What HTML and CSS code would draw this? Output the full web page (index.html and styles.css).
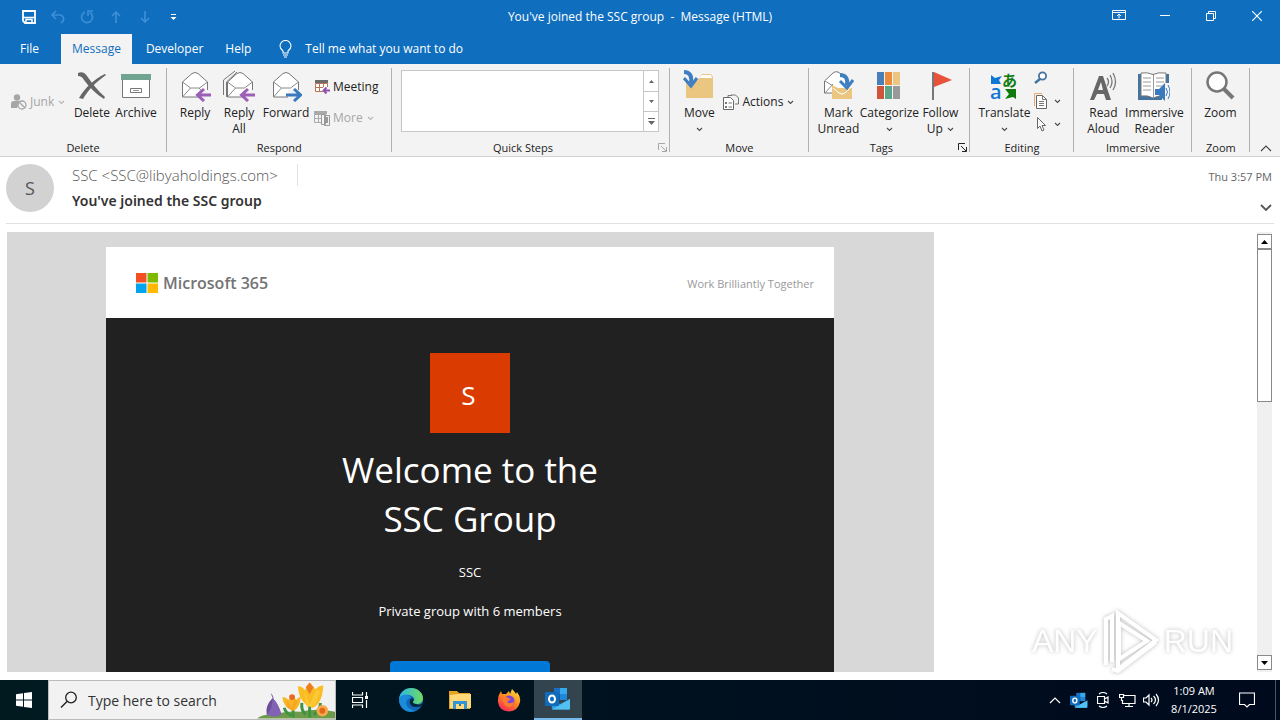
FILE: index.html
```html
<!DOCTYPE html>
<html lang="en">
<head>
  <meta charset="UTF-8" />
  <meta name="viewport" content="width=device-width, initial-scale=1.0"/>
  <title>You've joined the SSC group - Message (HTML)</title>
  <link rel="stylesheet" href="styles.css">
</head>
<body>
  <!-- shared symbols -->
  <svg class="defs" width="0" height="0" aria-hidden="true">
    <symbol id="chev" viewBox="0 0 7 5"><path d="M1 1l2.500 2.500L6 1" fill="none" stroke="currentColor" stroke-width="1.100"/></symbol>
    <symbol id="launcher" viewBox="0 0 9 9"><path d="M.5 7V.5H7M3 3l5 5M8.500 4v4.500H4" fill="none" stroke="currentColor"/></symbol>
    <symbol id="outlook" viewBox="0 0 26 24">
      <path d="M9 1h13v10H9z" fill="#1a6fc4"/>
      <path d="M15 1h7v6h-7z" fill="#38a9ea"/>
      <path d="M9 7h6v6H9z" fill="#155ea8"/>
      <path d="M15 7h7v6h-7z" fill="#1f86d8"/>
      <path d="M6 12l9 5 10-5v9.500a1 1 0 0 1-1 1H7z" fill="#2f9be0"/>
      <path d="M7 22.500L25 12v9.500a1 1 0 0 1-1 1z" fill="#51c1f1"/>
      <rect x="0" y="5" width="14" height="14" rx="1" fill="#0f6cbd"/>
      <ellipse cx="7" cy="12" rx="3" ry="3.500" fill="none" stroke="#fff" stroke-width="2"/>
    </symbol>
  </svg>

  <header class="titlebar">
    <div class="quick">
      <button aria-label="Save"><svg width="14" height="14" viewBox="0 0 14 14"><path d="M1 1h12v12H3l-2-2z" fill="none" stroke="#fff" stroke-width="1.800"/><path d="M1 7.500h12M4 13V9.500h6V13" fill="none" stroke="#fff" stroke-width="1.500"/></svg></button>
      <button aria-label="Undo" class="off"><svg width="14" height="14" viewBox="0 0 14 14"><path d="M5 1L1 5l4 4M1 5h8a4 4 0 0 1 3 6l-2 2" fill="none" stroke="currentColor" stroke-width="1.700"/></svg></button>
      <button aria-label="Redo" class="off"><svg width="14" height="14" viewBox="0 0 14 14"><path d="M5 2a5.500 5.500 0 1 0 5 0.500M13 1H8v5" fill="none" stroke="currentColor" stroke-width="1.700"/></svg></button>
      <button aria-label="Previous item" class="off"><svg width="12" height="14" viewBox="0 0 12 14"><path d="M6 13V2M2 6l4-4 4 4" fill="none" stroke="currentColor" stroke-width="1.700"/></svg></button>
      <button aria-label="Next item" class="off"><svg width="12" height="14" viewBox="0 0 12 14"><path d="M6 1v11M2 8l4 4 4-4" fill="none" stroke="currentColor" stroke-width="1.700"/></svg></button>
      <button aria-label="Customize"><svg width="7" height="7" viewBox="0 0 7 7"><path d="M1 0h5v1H1zM.5 3h6l-3 3z" fill="#fff"/></svg></button>
    </div>
    <h1 class="title">You've joined the SSC group&nbsp; -&nbsp; Message (HTML)</h1>
    <div class="winbtns">
      <button aria-label="Ribbon display options"><svg width="14" height="12" viewBox="0 0 14 12"><path d="M.5 1.500h13v9H.5zM.5 3.500h13M7 9.500V5M5 7l2-2 2 2" fill="none" stroke="#fff"/></svg></button>
      <button aria-label="Minimize"><svg width="10" height="10" viewBox="0 0 10 10"><path d="M0 4.500h10" stroke="#fff"/></svg></button>
      <button aria-label="Restore"><svg width="10" height="10" viewBox="0 0 10 10"><path d="M.5 2.500h7v7h-7zM2.500 2V.5h7v7H8" fill="none" stroke="#fff"/></svg></button>
      <button aria-label="Close"><svg width="10" height="10" viewBox="0 0 10 10"><path d="M0 0l10 10M10 0L0 10" stroke="#fff" stroke-width="1.200"/></svg></button>
    </div>
  </header>

  <nav class="tabs">
    <button class="tab file">File</button>
    <button class="tab active">Message</button>
    <button class="tab">Developer</button>
    <button class="tab">Help</button>
    <button class="tab tell">
      <svg width="13" height="18" viewBox="0 0 13 18"><path d="M4 13V11C2 9.500 1 8 1 6a5.500 5.500 0 0 1 11 0c0 2-1 3.500-3 5v2zM4 15h5M5 17h3" fill="none" stroke="#fff" stroke-width="1.100"/></svg>
      Tell me what you want to do
    </button>
  </nav>

  <section class="ribbon">
    <div class="group">
      <div class="tools delete">
        <button class="small off junk">
          <svg width="16" height="16" viewBox="0 0 16 16"><circle cx="6" cy="3.500" r="3.200" fill="#a6a6a6"/><path d="M0 14V10a3 3 0 0 1 3-3h6l-3 7z" fill="#a6a6a6"/><circle cx="11" cy="11" r="4" fill="#f3f3f3" stroke="#a6a6a6" stroke-width="1.300"/><path d="M8.300 8.300l5.500 5.500" stroke="#a6a6a6" stroke-width="1.300"/></svg>
          Junk <svg class="chev"><use href="#chev"/></svg>
        </button>
        <button class="big">
          <svg width="32" height="32" viewBox="0 0 32 32"><path d="M2 3c4-2 7 0 9 3 5 7 11 15 18 21l-1 2C20 24 13 17 8 10 6 7 5 6 2 6zM29 4l1 1C20 12 12 20 7 29l-4-1C9 18 18 9 29 4z" fill="#666"/></svg>
          <span>Delete</span>
        </button>
        <button class="big">
          <svg width="32" height="32" viewBox="0 0 32 32"><path d="M2.500 9h27v18.500h-27z" fill="#fff" stroke="#777"/><path d="M1 4h30v6H1z" fill="#72a492"/><path d="M10.500 18.500h11v4h-11z" fill="#fff" stroke="#777"/><path d="M13 20.500h6" stroke="#999"/></svg>
          <span>Archive</span>
        </button>
      </div>
      <div class="name">Delete</div>
    </div>

    <div class="group">
      <div class="tools respond">
        <button class="big">
          <svg width="32" height="32" viewBox="0 0 32 32"><path d="M3.500 12L13 3.500q3-2 6 0L28.500 12v15h-25z" fill="#fff" stroke="#777"/><path d="M3.500 12l8 6h9l8-6M3.500 27l8-9M20 18l8 9" fill="none" stroke="#888"/><path d="M20 20h12v12H20z" fill="#f3f3f3"/><path d="M32 25H19M25 19l-6.500 6 6.500 6" fill="none" stroke="#9b5fb8" stroke-width="3"/></svg>
          <span>Reply</span>
        </button>
        <button class="big">
          <svg width="32" height="32" viewBox="0 0 32 32"><path d="M.5 25V10L12 1M3.500 27V12L14 2" fill="none" stroke="#777"/><path d="M4.500 12L14 3.500q3-2 6 0L29.500 12v15h-25z" fill="#fff" stroke="#777"/><path d="M4.500 12l8 6h9l8-6M4.500 27l8-9" fill="none" stroke="#888"/><path d="M20 20h12v12H20z" fill="#f3f3f3"/><path d="M32 25H19M25 19l-6.500 6 6.500 6" fill="none" stroke="#9b5fb8" stroke-width="3"/></svg>
          <span>Reply<br>All</span>
        </button>
        <button class="big fwd">
          <svg width="32" height="32" viewBox="0 0 32 32"><path d="M3.500 12L13 3.500q3-2 6 0L28.500 12v15h-25z" fill="#fff" stroke="#777"/><path d="M3.500 12l8 6h9l8-6M3.500 27l8-9" fill="none" stroke="#888"/><path d="M18 20h14v12H18z" fill="#f3f3f3"/><path d="M16 25h13M24 19l6.500 6-6.500 6" fill="none" stroke="#3a79bd" stroke-width="3"/></svg>
          <span>Forward</span>
        </button>
        <div class="stack">
          <button class="small">
            <svg width="16" height="16" viewBox="0 0 16 16"><path d="M1.500 4.500h12v8h-12zM1.500 8.500h12M5.500 4.500v8M9.500 4.500v8" fill="#fff" stroke="#b9754f"/><path d="M1 1h13v3H1z" fill="#6b6b6b"/><path d="M9 8h7v7H9z" fill="#f3f3f3"/><path d="M16 11.500H10M12.500 8.500l-3 3 3 3" fill="none" stroke="#8b51ad" stroke-width="1.800"/></svg>
            Meeting
          </button>
          <button class="small off">
            <svg width="16" height="16" viewBox="0 0 16 16"><path d="M.5 4.500h11v8H.5zM.5 8.500h11M4.500 4.500v8" fill="none" stroke="#aaa"/><path d="M0 1h13v3H0z" fill="#aaa"/><path d="M7.500 4.500h4v10h-4zM10.500 5.500h5v10h-5z" fill="#f3f3f3" stroke="#999"/><path d="M12 7h2v6h-2z" fill="#999"/></svg>
            More <svg class="chev"><use href="#chev"/></svg>
          </button>
        </div>
      </div>
      <div class="name">Respond</div>
    </div>

    <div class="group">
      <div class="tools steps">
        <div class="gallery">
          <div class="gallery-list"></div>
          <div class="gallery-nav">
            <button aria-label="Row up"><svg width="5" height="3" viewBox="0 0 7 4"><path d="M0 4l3.500-4L7 4z" fill="#666"/></svg></button>
            <button aria-label="Row down"><svg width="5" height="3" viewBox="0 0 7 4"><path d="M0 0l3.500 4L7 0z" fill="#666"/></svg></button>
            <button aria-label="More steps"><svg width="7" height="7" viewBox="0 0 7 7"><path d="M0 0h7v1H0zM0 3l3.500 4L7 3z" fill="#666"/></svg></button>
          </div>
        </div>
      </div>
      <div class="name has-launcher">Quick Steps <button class="launcher off" aria-label="Quick Steps settings"><svg width="9" height="9"><use href="#launcher"/></svg></button></div>
    </div>

    <div class="group">
      <div class="tools move">
        <button class="big">
          <svg width="32" height="32" viewBox="0 0 32 32"><path d="M3 11h11l5-7h9l2 3v21H3z" fill="#eac680"/><path d="M16 8l3-3h9l1 3z" fill="#fff"/><path d="M1 2c6 0 8 4 7 11" fill="none" stroke="#3f7fc1" stroke-width="4"/><path d="M1 8l7 8 6-8" fill="none" stroke="#3f7fc1" stroke-width="3"/></svg>
          <span>Move<br><svg class="chev"><use href="#chev"/></svg></span>
        </button>
        <button class="small">
          <svg width="16" height="16" viewBox="0 0 16 16"><path d="M8 1h4.500l3 3v6H12M5 3V1.500h4" fill="none" stroke="#777"/><path d="M.5 3.500h7l3 3v9H.5z" fill="#fff" stroke="#666"/><path d="M2 8h2v2H2zM2 12h2v2H2z" fill="#777"/><path d="M5.500 9H9M5.500 13H9" stroke="#777"/></svg>
          Actions <svg class="chev"><use href="#chev"/></svg>
        </button>
      </div>
      <div class="name">Move</div>
    </div>

    <div class="group">
      <div class="tools tags">
        <button class="big">
          <svg width="32" height="32" viewBox="0 0 32 32"><path d="M2.500 11L11 3q2-2 5-1l9 6v15h-22.500z" fill="#fff" stroke="#777"/><path d="M3 23l8-9M3 11l8 5" fill="none" stroke="#888"/><path d="M10 15l6 3h14v11H10z" fill="#eac680"/><path d="M11 18l6 5q3 2 6 0l7-7" fill="none" stroke="#fff"/><path d="M18 5c6 0 8 4 7 10" fill="none" stroke="#3f7fc1" stroke-width="4"/><path d="M18 11l7 7 6-8" fill="none" stroke="#3f7fc1" stroke-width="3"/></svg>
          <span>Mark<br>Unread</span>
        </button>
        <button class="big cat">
          <svg width="32" height="32" viewBox="0 0 32 32"><path d="M4 2h7v13H4z" fill="#4a7ebb"/><path d="M12 2h7v13h-7z" fill="#ed8b3c"/><path d="M20 2h7v13h-7z" fill="#eac680"/><path d="M4 16h7v13H4z" fill="#d0533b"/><path d="M12 16h7v13h-7z" fill="#5ca58a"/><path d="M20 16h7v13h-7z" fill="#999"/></svg>
          <span>Categorize<br><svg class="chev"><use href="#chev"/></svg></span>
        </button>
        <button class="big">
          <svg width="32" height="32" viewBox="0 0 32 32"><path d="M10 2l18 8-18 7z" fill="#e8523a"/><path d="M8 2h2v28H8z" fill="#777"/></svg>
          <span>Follow<br>Up <svg class="chev"><use href="#chev"/></svg></span>
        </button>
      </div>
      <div class="name has-launcher">Tags <button class="launcher" aria-label="Tag options"><svg width="9" height="9"><use href="#launcher"/></svg></button></div>
    </div>

    <div class="group">
      <div class="tools editing">
        <button class="big wide">
          <svg class="translate" width="32" height="32" viewBox="0 0 32 32"><path d="M3 5l4 3 7-2-3 4 2 4H3z" fill="#0f78d4"/><text class="glyph-ja" x="14" y="16">あ</text><text class="glyph-a" x="2" y="29">a</text><path d="M17 19h11v10l-3-2-8 2 4-5z" fill="#0f7b0f"/></svg>
          <span>Translate<br><svg class="chev"><use href="#chev"/></svg></span>
        </button>
        <div class="edit-icons">
          <button aria-label="Find"><svg width="14" height="14" viewBox="0 0 14 14"><circle cx="8.500" cy="5" r="3.600" fill="#fff" stroke="#44739f" stroke-width="1.800"/><path d="M6 8l-5 4" stroke="#44739f" stroke-width="2.500"/></svg></button>
          <button aria-label="Related"><svg width="14" height="16" viewBox="0 0 14 16"><path d="M.5 13V.5H8" fill="none" stroke="#e8a86a"/><path d="M2.500 2.500h6l4 4v9h-10z" fill="#fff" stroke="#666"/><path d="M8.500 2.500v4h4M5 8.500h5M5 10.500h5M5 12.500h5" fill="none" stroke="#777"/></svg><svg class="chev"><use href="#chev"/></svg></button>
          <button aria-label="Select"><svg width="14" height="16" viewBox="0 0 14 16"><path d="M3.500 1.500v11l2.500-2.500 2 5 2-1-2-4.500h3.500z" fill="#fff" stroke="#666"/></svg><svg class="chev"><use href="#chev"/></svg></button>
        </div>
      </div>
      <div class="name">Editing</div>
    </div>

    <div class="group">
      <div class="tools immersive">
        <button class="big">
          <svg width="32" height="32" viewBox="0 0 32 32"><path d="M3 30L12 6h4l8 24h-5l-2-6H10l-3 6zM11 20h5l-2-8z" fill="#666" fill-rule="evenodd"/><path d="M20 8q3 4 0 8M23 5q4 7 0 13M26 3q5 9 0 17" fill="none" stroke="#777" stroke-width="1.300"/></svg>
          <span>Read<br>Aloud</span>
        </button>
        <button class="big imm">
          <svg width="32" height="32" viewBox="0 0 32 32"><path d="M0 4h31v26H0z" fill="#44739f"/><path d="M3 3q7-1 12 1.500Q20 2 28 3v23q-7-1-13 2-5-3-12-2z" fill="#fff" stroke="#777"/><path d="M15.500 5v22M5 8h8M5 12h8M5 16h8M5 20h8M18 8h8M18 12h8M18 16h8" stroke="#999"/><path d="M24 13h8v18h-8z" fill="#f3f3f3"/><path d="M17 19h4l6-6v18l-6-6h-4z" fill="#3a79bd"/><path d="M28 18q3 4 0 8M30 15q4 7 0 14" fill="none" stroke="#3a79bd"/></svg>
          <span>Immersive<br>Reader</span>
        </button>
      </div>
      <div class="name">Immersive</div>
    </div>

    <div class="group">
      <div class="tools zoom">
        <button class="big">
          <svg width="32" height="32" viewBox="0 0 32 32"><circle cx="13" cy="12" r="9.500" fill="#fff" stroke="#777" stroke-width="2.500"/><path d="M20 19l9 9" stroke="#777" stroke-width="4"/></svg>
          <span>Zoom</span>
        </button>
      </div>
      <div class="name">Zoom</div>
    </div>
    <button class="collapse" aria-label="Collapse the ribbon"><svg width="12" height="7" viewBox="0 0 12 7"><path d="M1 6l5-5 5 5" fill="none" stroke="#444" stroke-width="1.100"/></svg></button>
  </section>

  <section class="msg-head">
    <div class="avatar">S</div>
    <div class="who">
      <div class="from">SSC &lt;SSC@libyaholdings.com&gt;</div>
      <h2 class="subject">You've joined the SSC group</h2>
    </div>
    <div class="when">
      <time>Thu 3:57 PM</time>
      <button aria-label="Expand header"><svg width="12" height="8" viewBox="0 0 12 8"><path d="M1 1l5 5 5-5" fill="none" stroke="#555" stroke-width="1.800"/></svg></button>
    </div>
  </section>

  <main class="reader">
    <div class="mail">
      <div class="card">
        <div class="brand">
          <div class="logo">
            <svg width="22" height="20" viewBox="0 0 22 20"><path d="M0 0h10.500v9.500H0z" fill="#f25022"/><path d="M11.500 0H22v9.500H11.500z" fill="#7fba00"/><path d="M0 10.500h10.500V20H0z" fill="#00a4ef"/><path d="M11.500 10.500H22V20H11.500z" fill="#ffb900"/></svg>
            Microsoft 365
          </div>
          <span class="motto">Work Brilliantly Together</span>
        </div>
        <div class="welcome">
          <div class="tile">S</div>
          <h3>Welcome to the<br>SSC Group</h3>
          <p>SSC</p>
          <p>Private group with 6 members</p>
          <a class="cta" href="#" aria-label="Open group"></a>
        </div>
      </div>
    </div>
    <div class="scrollbar">
      <button aria-label="Scroll up"><svg width="7" height="4" viewBox="0 0 7 4"><path d="M0 4l3.500-4L7 4z"/></svg></button>
      <div class="thumb"></div>
      <button class="down" aria-label="Scroll down"><svg width="7" height="4" viewBox="0 0 7 4"><path d="M0 0l3.500 4L7 0z"/></svg></button>
    </div>
    <div class="watermark">
      <span>ANY</span>
      <svg width="58" height="64" viewBox="0 0 58 64"><path d="M4 56V10l6-3v46M16 60V4l38 27-38 29M17 14l28 18-28 18V14M10 60l6 2 38-29" fill="none" stroke="#fff" stroke-width="4"/></svg>
      <span>RUN</span>
    </div>
  </main>

  <footer class="taskbar">
    <button class="start" aria-label="Start"><svg width="16" height="16" viewBox="0 0 16 16"><path d="M0 2.300L7 1.300v6.200H0zM8 1.100L16 0v7.500H8zM0 8.500h7v6.200l-7-1zM8 8.500h8V16l-8-1.100z" fill="#fff"/></svg></button>
    <label class="search">
      <svg width="18" height="18" viewBox="0 0 18 18"><circle cx="11" cy="6.500" r="5.300" fill="none" stroke="#222" stroke-width="1.300"/><path d="M7 10.500L1 16.500" stroke="#222" stroke-width="1.400"/></svg>
      <input type="text" placeholder="Type here to search" aria-label="Type here to search">
      <svg class="flowers" width="78" height="38" viewBox="0 0 80 38">
        <path d="M0 38q6-5 18-4 12-4 26-3 18-4 36 0v7z" fill="#6e9b4a"/>
        <path d="M10 34q-2-9 6-17 7 8 9 17z" fill="#6b4d9b"/>
        <path d="M16 17q-1-3-2-5 3 2 3 6 5 5 8 16-7 4-15 0 6-6 6-17z" fill="#8162b3"/>
        <path d="M37 37V25M54 37V23M50 34q-5-4-4-12M58 34q7-4 7-12M35 35q-6-3-7-8" fill="none" stroke="#3d9440" stroke-width="3"/>
        <path d="M26 16q4 0 6 3l5-5 3 5q2-3 5-3-1 11-7 14-11-2-12-14z" fill="#f8b825"/>
        <path d="M31 18l4 9 4-9 3 3-5 9-6-3z" fill="#f5a623"/><circle cx="36" cy="16" r="3" fill="#e8691b"/>
        <path d="M42 5q5 0 7 4l5-8 6 7q3-4 8-4-1 19-11 23-14-4-15-22z" fill="#f9bd23"/>
        <path d="M48 8l6 16 7-16 4 2-6 15-8 1z" fill="#fcc934"/><path d="M50 6l4-5 4 5-4 7z" fill="#ef7d1d"/>
        <circle cx="67" cy="30" r="6" fill="#f9a84b"/><circle cx="67" cy="30" r="3" fill="#e0691c"/>
      </svg>
    </label>
    <div class="apps">
      <button class="taskview" aria-label="Task View"><svg width="17" height="16" viewBox="0 0 17 16"><path d="M.5 0v3h10V0M.5 5.500h10v5H.5zM.5 16v-3h10v3M14.500 0v4M14.500 8v8" fill="none" stroke="#fff" stroke-width="1.200"/><path d="M13 4h3v3h-3z" fill="#fff"/></svg></button>
      <button aria-label="Edge"><svg width="24" height="24" viewBox="0 0 24 24">
        <defs><linearGradient id="eg" x1="0" x2="1"><stop offset="0" stop-color="#2bb6e8"/><stop offset="1" stop-color="#6fdc61"/></linearGradient></defs>
        <circle cx="12" cy="12" r="12" fill="#1268b8"/><path d="M0 11C1 4 6 0 12 0c7 0 12 5 12 10 0 4-3 6-6 6s-4-1-4-2 2-2 1-4C13 6 3 5 0 11z" fill="url(#eg)"/><path d="M0 11C3 5 11 6 12 10c-4 0-6 4-4 8 2 3 6 4 8 5C8 26 0 20 0 11z" fill="#1b8bdb"/><path d="M13 10c-4 2-3 9 4 9 4 0 6-1 7-4-3 2-5 2-7 1-2 0-3-1-3-2s2-2-1-4z" fill="#06263a"/></svg></button>
      <button aria-label="File Explorer"><svg width="22" height="20" viewBox="0 0 22 20"><path d="M0 1h8l2 2h11v16H0z" fill="#e6a323"/><path d="M1 5l8-1h13v14H1z" fill="#ffd977"/><path d="M4 11h14v8H4z" fill="#3295d6"/><path d="M7 14h8v5H7z" fill="#ffd977"/><path d="M10 14h2v2h-2z" fill="#2474ae"/></svg></button>
      <button aria-label="Firefox"><svg width="24" height="24" viewBox="0 0 24 24">
        <defs><linearGradient id="ff" x1=".8" y1="0" x2=".2" y2="1"><stop offset="0" stop-color="#ffe03b"/><stop offset=".45" stop-color="#ff8a20"/><stop offset="1" stop-color="#f8215c"/></linearGradient></defs>
        <path d="M4 3l1 3 4 0 3-3 1 3 2-5q3 3 4 5l1-2q4 5 3 10-2 9-11 9.500Q2 23 1 14 .5 8 4 3z" fill="url(#ff)"/><circle cx="12" cy="13" r="5.500" fill="#7b45d8"/><path d="M5 9q4-2 6 1l3 1q-3 2-4 3 4 3 7-1-1 7-6 6-5-1-6-10z" fill="#ff7b2b"/></svg></button>
      <button class="running" aria-label="Outlook"><svg width="26" height="24"><use href="#outlook"/></svg></button>
    </div>
    <div class="tray">
      <button aria-label="Show hidden icons"><svg width="12" height="8" viewBox="0 0 12 8"><path d="M1 7l5-5 5 5" fill="none" stroke="#fff" stroke-width="1.200"/></svg></button>
      <button aria-label="Outlook"><svg width="18" height="17"><use href="#outlook"/></svg></button>
      <button aria-label="Camera"><svg width="12" height="16" viewBox="0 0 12 16"><path d="M.5 4.500h7v7h-7zM7.500 7l3.500-2v6L7.500 9M2 2q4-3 8 0M2 14q4 3 8 0" fill="none" stroke="#fff" stroke-width="1.200"/></svg></button>
      <button aria-label="Network"><svg width="17" height="15" viewBox="0 0 17 15"><path d="M5 2.500h11v8H3.500V7M10 10.500v3M6 13.500h8M.5 1.500h4v3h-4zM2.500 5v3" fill="none" stroke="#fff" stroke-width="1.200"/></svg></button>
      <button aria-label="Volume"><svg width="17" height="14" viewBox="0 0 17 14"><path d="M.5 5h2.500l3-3v10L3 9H.5zM8 5q2 2 0 4M10.500 3q4 4 0 8M13 1q5 6 0 12" fill="none" stroke="#fff" stroke-width="1.200"/></svg></button>
      <time class="clock">1:09 AM<br>8/1/2025</time>
      <button class="notes" aria-label="Notifications"><svg width="16" height="16" viewBox="0 0 16 16"><path d="M.5 1h15v11.500h-5L8 15l-2.500-2.500h-5z" fill="none" stroke="#fff" stroke-width="1.200"/></svg></button>
    </div>
  </footer>
</body>
</html>
```
FILE: styles.css
```css
* {
  box-sizing: border-box;
}

body {
  margin: 0;
  height: 100vh;
  display: flex;
  flex-direction: column;
  overflow: hidden;
  background: #fff;
  color: #222;
  font-family: "Open Sans", "Noto Sans", sans-serif;
  font-size: 12px;
  line-height: 16px;
}

button {
  padding: 0;
  border: none;
  background: none;
  color: inherit;
  font: inherit;
}

svg {
  flex: none;
}

.defs {
  position: absolute;
}

/* Title bar */
.titlebar {
  display: grid;
  grid-template-columns: 1fr auto 1fr;
  align-items: center;
  height: 34px;
  flex: none;
  background: #106ebe;
  color: #fff;
}

.quick {
  display: flex;
  padding-left: 14px;
}

.quick button {
  width: 29px;
  height: 30px;
  display: flex;
  align-items: center;
  justify-content: center;
}

.titlebar .off {
  color: #3c8fd6;
}

.title {
  margin: 0;
  font-size: 12px;
  font-weight: 400;
}

.winbtns {
  display: flex;
  justify-content: flex-end;
}

.winbtns button {
  width: 46px;
  height: 34px;
}

/* Tabs */
.tabs {
  display: flex;
  flex: none;
  height: 30px;
  background: #106ebe;
  color: #fff;
}

.tab {
  padding: 0 11px;
}

.tab.file {
  padding: 0 22px 0 20px;
}

.tab.active {
  margin-right: 3px;
  background: #f3f3f3;
  color: #106ebe;
}

.tab.tell {
  display: flex;
  align-items: center;
  gap: 13px;
  padding-left: 17px;
}

/* Ribbon */
.ribbon {
  display: flex;
  flex: none;
  height: 93px;
  padding: 4px 0;
  background: #f3f3f3;
  border-bottom: 1px solid #d2d2d2;
}

.group {
  display: flex;
  flex-direction: column;
  border-right: 1px solid #b1b1b1;
}

.tools {
  display: flex;
  flex: 1;
  align-items: flex-start;
  min-height: 0;
  padding: 2px 6px 0;
}

.name {
  display: flex;
  flex: none;
  align-items: center;
  justify-content: center;
  position: relative;
  height: 16px;
  margin-bottom: -4px;
  font-size: 11px;
}

.has-launcher {
  padding-right: 16px;
}

.launcher {
  position: absolute;
  right: 2px;
  bottom: 4px;
  display: flex;
}

.off {
  color: #a6a6a6;
}

.big {
  width: 44px;
  display: flex;
  flex-direction: column;
  align-items: center;
  gap: 3px;
  white-space: nowrap;
}

.small {
  display: flex;
  align-items: center;
  gap: 3px;
  height: 20px;
}

.chev {
  width: 7px;
  height: 5px;
  margin-left: 1px;
  opacity: 0.8;
  vertical-align: middle;
}

.delete {
  padding-right: 8px;
  padding-left: 11px;
}

.junk {
  width: 59px;
}

.delete .junk,
.move .small {
  margin-top: 22px;
}

.fwd {
  width: 50px;
}

.stack {
  display: flex;
  flex-direction: column;
  gap: 11px;
  padding: 7px 7px 0 3px;
}

.steps {
  padding: 2px 10px 0 9px;
}

.gallery {
  display: flex;
  width: 258px;
  height: 62px;
  border: 1px solid #c6c6c6;
  background: #fff;
}

.gallery-list {
  flex: 1;
}

.gallery-nav {
  display: grid;
  grid-template-rows: 1fr 1fr 1fr;
  width: 15px;
  border-left: 1px solid #c6c6c6;
}

.gallery-nav button {
  display: flex;
  align-items: center;
  justify-content: center;
}

.gallery-nav button + button {
  border-top: 1px solid #c6c6c6;
}

.move {
  padding: 2px 14px 0 7px;
}

.move .small {
  margin-left: 2px;
}

.tags {
  padding: 2px 7px 0;
}

.big.cat,
.big.imm {
  width: 58px;
}

.editing {
  padding: 2px 12px 0 9px;
}

.big.wide {
  width: 50px;
}

.translate {
  overflow: visible;
}

.glyph-ja {
  font: 700 15px "Noto Sans CJK JP", sans-serif;
  fill: #0f7b0f;
}

.glyph-a {
  font: 600 20px "Open Sans", sans-serif;
  fill: #0f78d4;
}

.edit-icons {
  display: flex;
  flex-direction: column;
  gap: 7px;
  padding-left: 5px;
}

.edit-icons button {
  display: flex;
  align-items: center;
  gap: 5px;
  height: 16px;
}

.immersive {
  padding: 2px 8px 0 7px;
}

.zoom {
  padding: 2px 7px 0 6px;
}

.collapse {
  align-self: flex-end;
  margin-left: auto;
  padding: 0 8px;
  line-height: 8px;
}

/* Message header */
.msg-head {
  display: flex;
  flex: none;
  gap: 18px;
  height: 67px;
  margin: 0 6px;
  padding: 7px 2px 0 0;
  border-bottom: 1px solid #e1e1e1;
}

.avatar {
  width: 48px;
  height: 48px;
  border-radius: 50%;
  background: #d2d2d2;
  color: #555;
  font-size: 18px;
  line-height: 48px;
  text-align: center;
}

.who {
  flex: 1;
}

.from {
  width: max-content;
  padding-right: 19px;
  border-right: 1px solid #e1e1e1;
  color: #555;
  font-size: 15px;
  font-weight: 300;
  line-height: 22px;
}

.subject {
  margin: 5px 0 0;
  color: #333;
  font-family: "Noto Sans", "Open Sans", sans-serif;
  font-size: 14px;
  font-weight: 600;
  line-height: 20px;
}

.when {
  display: flex;
  flex-direction: column;
  align-items: flex-end;
  gap: 15px;
  padding-top: 5px;
  color: #666;
}

.when time {
  font-size: 11px;
}

/* Reading pane */
.reader {
  position: relative;
  display: flex;
  justify-content: space-between;
  flex: 1;
  min-height: 0;
  padding: 8px 8px 8px 7px;
}

.mail {
  width: 100%;
  max-width: 927px;
  overflow: hidden;
  padding: 15px 1px 0 0;
  background: #d8d8d8;
}

.card {
  max-width: 728px;
  margin: 0 auto;
  background: #fff;
}

.brand {
  display: flex;
  align-items: center;
  justify-content: space-between;
  height: 71px;
  padding: 0 20px 0 30px;
}

.logo {
  display: flex;
  align-items: center;
  gap: 5px;
  color: #737373;
  font-size: 16px;
  font-weight: 600;
}

.motto {
  padding-top: 2px;
  color: #999;
  font-size: 11px;
}

.welcome {
  display: flex;
  flex-direction: column;
  align-items: center;
  padding: 35px 0 60px;
  background: #212121;
  color: #fff;
  font-size: 13px;
  text-align: center;
}

.tile {
  width: 80px;
  height: 80px;
  padding-right: 3px;
  background: #da3b01;
  font-size: 26px;
  line-height: 84px;
}

.welcome h3 {
  margin: 12px 0 0;
  font-size: 35px;
  font-weight: 400;
  line-height: 49px;
}

.welcome p {
  margin: 19px 0 0;
  line-height: 20px;
}

.cta {
  width: 160px;
  height: 40px;
  margin-top: 40px;
  border-radius: 4px;
  background: #0078d7;
}

.scrollbar {
  display: flex;
  flex-direction: column;
  width: 15px;
  padding: 2px 0;
  background: #f0f0f0;
}

.scrollbar button {
  display: flex;
  align-items: center;
  justify-content: center;
  height: 15px;
  border: 1px solid #8a8a8a;
  background: #fff;
}

.scrollbar .thumb {
  height: 35%;
  border: 1px solid #8a8a8a;
  background: #fff;
}

.scrollbar .down {
  margin-top: auto;
}

/* Overlay mark in the corner */
.watermark {
  position: absolute;
  right: 47px;
  bottom: 7px;
  display: flex;
  align-items: center;
  gap: 4px;
  color: #fff;
  font-family: "Liberation Sans", sans-serif;
  font-size: 32px;
  line-height: 64px;
  filter: drop-shadow(0 0 2px #bbb);
}

/* Taskbar */
.taskbar {
  display: flex;
  flex: none;
  height: 40px;
  background: linear-gradient(90deg, #001a20, #000e1e 70%, #000a1e);
  color: #fff;
}

.start {
  width: 48px;
}

.start svg,
.apps svg {
  display: block;
  margin: auto;
}

.search {
  display: flex;
  align-items: center;
  width: 288px;
  padding-left: 11px;
  border: 1px solid #bbb;
  background: #f2f2f2;
}

.search input {
  flex: 1;
  min-width: 0;
  padding: 0 0 0 10px;
  border: none;
  background: none;
  color: #333;
  font: 14px "Open Sans", "Noto Sans", sans-serif;
}

.search input::placeholder {
  color: #333;
}

.apps {
  display: flex;
  gap: 1px;
}

.apps button {
  width: 48px;
}

.apps .taskview {
  padding-right: 2px;
  width: 50px;
}

.apps .running {
  border-bottom: 2px solid #76b9ed;
  background: #33444f;
}

.tray {
  display: flex;
  align-items: center;
  margin-left: auto;
  margin-right: 4px;
  border-right: 1px solid #4a5563;
}

.tray button {
  display: flex;
  align-items: center;
  justify-content: center;
  width: 24px;
  height: 40px;
}

.clock {
  width: 62px;
  font-size: 11px;
  line-height: 18px;
  text-align: center;
}

.tray .notes {
  width: 50px;
  padding-right: 6px;
}
```
